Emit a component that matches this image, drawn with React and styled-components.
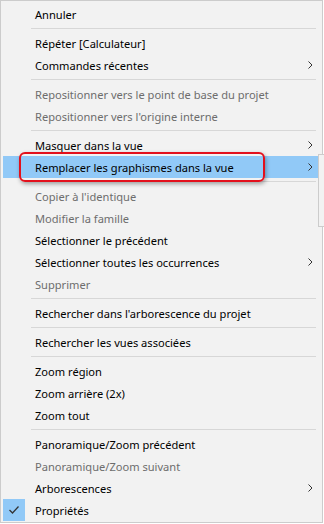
import React from 'react';
import styled, { createGlobalStyle } from 'styled-components';

const items = [
  { text: 'Annuler' },
  { sep: true },
  { text: 'Répéter [Calculateur]' },
  { text: 'Commandes récentes', sub: true },
  { sep: true },
  { text: 'Repositionner vers le point de base du projet', disabled: true },
  { text: "Repositionner vers l'origine interne", disabled: true },
  { sep: true },
  { text: 'Masquer dans la vue', sub: true },
  { text: 'Remplacer les graphismes dans la vue', sub: true, active: true },
  { sep: true },
  { text: "Copier à l'identique", disabled: true },
  { text: 'Modifier la famille', disabled: true },
  { text: 'Sélectionner le précédent' },
  { text: 'Sélectionner toutes les occurrences', sub: true },
  { text: 'Supprimer', disabled: true },
  { sep: true },
  { text: "Rechercher dans l'arborescence du projet" },
  { sep: true },
  { text: 'Rechercher les vues associées' },
  { sep: true },
  { text: 'Zoom région' },
  { text: 'Zoom arrière (2x)' },
  { text: 'Zoom tout' },
  { sep: true },
  { text: 'Panoramique/Zoom précédent' },
  { text: 'Panoramique/Zoom suivant', disabled: true },
  { text: 'Arborescences', sub: true },
  { text: 'Propriétés', checked: true },
];

export default function App() {
  return (
    <>
      <GlobalStyle />
      <Menu>
        {items.map((item, index) => {
          if (item.sep) return <Separator key={index} />;
          return (
            <Item key={index} $active={item.active} $disabled={item.disabled}>
              <IconCell>
                {item.checked && (
                  <CheckBox>
                    <svg width="12" height="10" viewBox="0 0 12 10">
                      <polyline points="1.5,5 4.5,8 10.5,1.5" fill="none" stroke="#333" strokeWidth="1.3" />
                    </svg>
                  </CheckBox>
                )}
              </IconCell>
              <Label>{item.text}</Label>
              {item.sub && (
                <Chevron>
                  <svg width="5" height="8" viewBox="0 0 5 8">
                    <polyline points="0.5,0.5 4,4 0.5,7.5" fill="none" stroke="#333" strokeWidth="1" />
                  </svg>
                </Chevron>
              )}
            </Item>
          );
        })}
        <Highlight />
        <SubMenuEdge />
      </Menu>
    </>
  );
}

// Styles

const GlobalStyle = createGlobalStyle`
  html, body {
    margin: 0;
    padding: 0;
    background: #ffffff;
  }
`;

const Menu = styled.div`
  position: relative;
  box-sizing: border-box;
  width: 323px;
  height: 523px;
  padding: 2px;
  background: #f2f2f2;
  border: 1px solid #cccccc;
  font-family: "Noto Sans", "Liberation Sans", sans-serif;
  font-size: 11.1px;
`;

const Item = styled.div`
  display: flex;
  align-items: center;
  height: 22px;
  margin-right: 1px;
  color: ${props => (props.$disabled ? '#6d6d6d' : '#000000')};
  background: ${props => (props.$active ? '#91c9f7' : 'transparent')};
`;

const IconCell = styled.div`
  width: 32px;
  height: 22px;
  flex-shrink: 0;
`;

const CheckBox = styled.div`
  width: 22px;
  height: 22px;
  background: #91c9f7;
  display: flex;
  align-items: center;
  justify-content: center;
`;

const Label = styled.span`
  flex: 1;
  white-space: nowrap;
`;

const Chevron = styled.span`
  display: flex;
  width: 5px;
  margin-right: 6px;
`;

const Separator = styled.div`
  height: 1px;
  margin: 3px 4px 3px 28px;
  background: #d7d7d7;
`;

const Highlight = styled.div`
  position: absolute;
  left: 18px;
  top: 151px;
  width: 246px;
  height: 30px;
  box-sizing: border-box;
  border: 2px solid #e3101c;
  border-radius: 6px;
  box-shadow: 1px 2px 4px rgba(0, 0, 0, 0.35);
`;

const SubMenuEdge = styled.div`
  position: absolute;
  left: 317px;
  top: 153px;
  width: 10px;
  height: 71px;
  background: #f2f2f2;
  border: 1px solid #cccccc;
`;
